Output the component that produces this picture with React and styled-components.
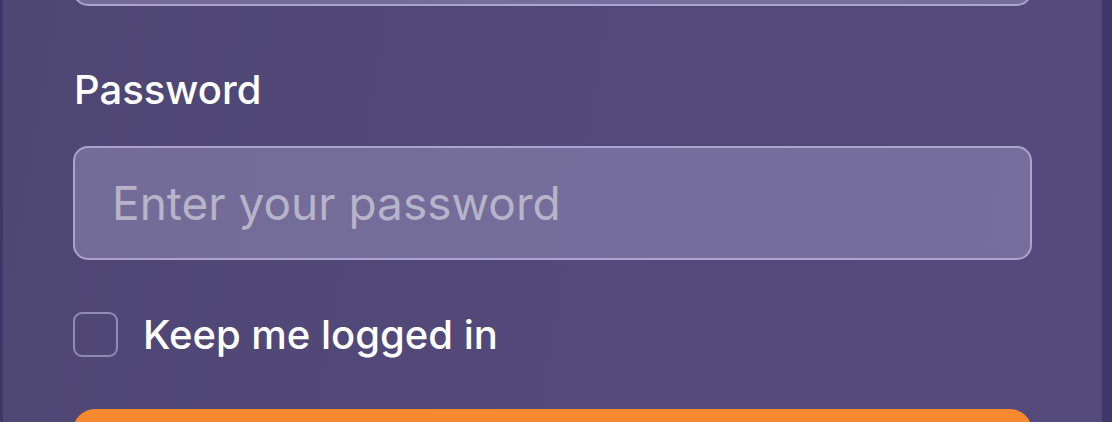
import styled, { createGlobalStyle } from 'styled-components';

const GlobalStyle = createGlobalStyle`
  html, body {
    margin: 0;
    padding: 0;
    background: #3f3769;
    font-family: Inter, "Noto Sans", sans-serif;
    overflow: hidden;
  }
`;

const Screen = styled.div`
  display: flex;
  height: 422px;
  overflow: hidden;
  padding-left: 3px;
  padding-right: 10px;
`;

const Card = styled.div`
  flex: 1;
  display: flex;
  flex-direction: column;
  padding: 0 70px;
  background: linear-gradient(100deg, #4e4673 0%, #534a7b 60%, #544b7c 100%);
`;

const Form = styled.div`
  display: flex;
  flex-direction: column;
  margin-top: -108px;
`;

const Field = styled.div`
  display: flex;
  flex-direction: column;
`;

const Label = styled.label`
  color: #ffffff;
  font-size: 40px;
  font-weight: 500;
  line-height: 44px;
  margin: 62px 0 34px 1px;
`;

const Input = styled.input`
  box-sizing: border-box;
  width: 100%;
  height: 114px;
  border: 2px solid rgba(190, 182, 225, 0.75);
  border-radius: 15px;
  background: rgba(160, 152, 195, 0.45);
  padding: 0 37px;
  font-family: Inter, "Noto Sans", sans-serif;
  font-size: 46px;
  color: #ffffff;
  outline: none;

  &::placeholder {
    color: #b7b3c9;
    opacity: 1;
  }
`;

const CheckRow = styled.label`
  display: flex;
  align-items: center;
  gap: 25px;
  margin-top: 50px;
`;

const Box = styled.span`
  box-sizing: border-box;
  width: 45px;
  height: 45px;
  border: 2px solid #928ab6;
  border-radius: 9px;
`;

const CheckText = styled.span`
  color: #ffffff;
  font-size: 40px;
  font-weight: 500;
`;

const Button = styled.button`
  margin-top: 50px;
  height: 110px;
  border: none;
  border-radius: 22px;
  background: #f7892f;
`;

export default function App() {
  return (
    <>
      <GlobalStyle />
      <Screen>
        <Card>
          <Form>
            <Input type="email" placeholder="" />
            <Field>
              <Label>Password</Label>
              <Input type="password" placeholder="Enter your password" />
            </Field>
            <CheckRow>
              <Box />
              <CheckText>Keep me logged in</CheckText>
            </CheckRow>
            <Button />
          </Form>
        </Card>
      </Screen>
    </>
  );
}
